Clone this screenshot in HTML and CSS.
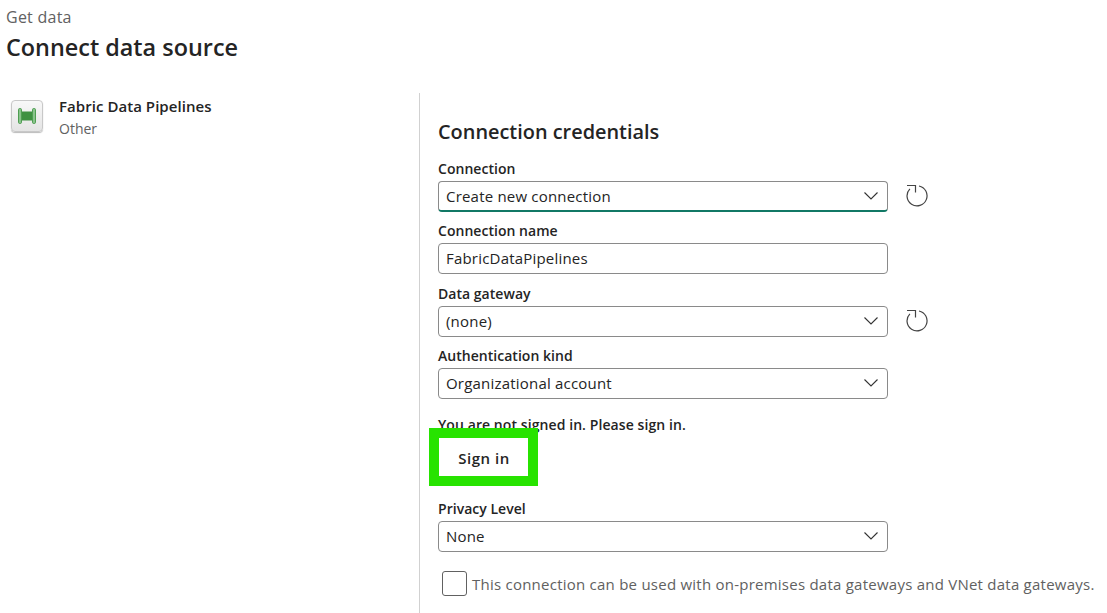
FILE: index.html
```html
<!DOCTYPE html>
<html lang="en">
<head>
<meta charset="utf-8">
<title>Connect data source</title>
<link rel="stylesheet" href="styles.css">
</head>
<body>
<header class="head">
  <div class="crumb">Get data</div>
  <h1 class="title">Connect data source</h1>
</header>
<main class="main">
  <aside class="side">
    <div class="tile">
      <svg width="20" height="16" viewBox="0 0 20 16"><rect x="4" y="3.5" width="12" height="9" fill="#3f9142"/><rect x="1.5" y="0.5" width="3" height="15" rx="1.2" fill="#8ac48c" stroke="#4f9e52"/><rect x="15.5" y="0.5" width="3" height="15" rx="1.2" fill="#8ac48c" stroke="#4f9e52"/></svg>
    </div>
    <div class="meta">
      <div class="name">Fabric Data Pipelines</div>
      <div class="kind">Other</div>
    </div>
  </aside>
  <section class="form">
    <h2 class="sub">Connection credentials</h2>
    <div class="lab lab-first">Connection</div>
    <div class="row">
      <div class="box box-active"><span>Create new connection</span><svg class="chev" width="14" height="8" viewBox="0 0 14 8"><path d="M.5.5l6.5 6.5 6.5-6.5" fill="none" stroke="#333" stroke-width="1.1"/></svg></div>
      <svg class="refresh" width="24" height="25" viewBox="0 0 24 25"><path d="M4.9 6.8A10 10 0 1 0 14 4" fill="none" stroke="#444" stroke-width="1.2"/><path d="M2 3.5H10.5V10.5" fill="none" stroke="#444" stroke-width="1.2"/></svg>
    </div>
    <div class="lab">Connection name</div>
    <div class="row"><div class="box"><span>FabricDataPipelines</span></div></div>
    <div class="lab lab-wide">Data gateway</div>
    <div class="row">
      <div class="box"><span>(none)</span><svg class="chev" width="14" height="8" viewBox="0 0 14 8"><path d="M.5.5l6.5 6.5 6.5-6.5" fill="none" stroke="#333" stroke-width="1.1"/></svg></div>
      <svg class="refresh" width="24" height="25" viewBox="0 0 24 25"><path d="M4.9 6.8A10 10 0 1 0 14 4" fill="none" stroke="#444" stroke-width="1.2"/><path d="M2 3.5H10.5V10.5" fill="none" stroke="#444" stroke-width="1.2"/></svg>
    </div>
    <div class="lab">Authentication kind</div>
    <div class="row"><div class="box"><span>Organizational account</span><svg class="chev" width="14" height="8" viewBox="0 0 14 8"><path d="M.5.5l6.5 6.5 6.5-6.5" fill="none" stroke="#333" stroke-width="1.1"/></svg></div></div>
    <div class="signin">
      <div class="notice">You are not signed in. Please sign in.</div>
      <div class="mark"><div class="btn">Sign in</div></div>
    </div>
    <div class="lab">Privacy Level</div>
    <div class="row"><div class="box"><span>None</span><svg class="chev" width="14" height="8" viewBox="0 0 14 8"><path d="M.5.5l6.5 6.5 6.5-6.5" fill="none" stroke="#333" stroke-width="1.1"/></svg></div></div>
    <div class="check"><div class="cb"></div><span>This connection can be used with on-premises data gateways and VNet data gateways.</span></div>
  </section>
</main>
</body>
</html>
```
FILE: styles.css
```css
* { box-sizing: border-box; }
html, body { margin: 0; height: 100%; overflow: hidden; background: #fff; }
body { font-family: "Open Sans", "Noto Sans", sans-serif; color: #242424; width: 1107px; height: 613px; }
.head { padding: 7px 0 0 6px; height: 93px; }
.crumb { font-size: 16px; line-height: 20px; color: #616161; letter-spacing: .25px; }
.title { margin: 4px 0 0; font-size: 23.4px; line-height: 32px; font-weight: 600; color: #242424; }
.main { display: flex; height: 520px; }
.side { width: 420px; border-right: 1px solid #d1d1d1; display: flex; padding: 7px 0 0 11px; }
.tile { width: 32px; height: 32px; border: 1px solid #c8c8c8; border-radius: 4px; background: linear-gradient(#f8f8f8, #e4e4e4); display: flex; align-items: center; justify-content: center; box-shadow: 0 1px 1px #bbb; }
.meta { margin: -7px 0 0 16px; }
.name { font-size: 15px; letter-spacing: .05px; line-height: 20px; font-weight: 600; margin-top: 3px; }
.kind { font-size: 14px; line-height: 20px; color: #616161; margin-top: 3px; }
.form { padding: 24px 0 0 18px; flex: 1; }
.sub { margin: 0; font-size: 19.9px; line-height: 30px; font-weight: 600; }
.lab { font-size: 14px; letter-spacing: .03px; line-height: 18px; font-weight: 600; height: 21px; margin-top: 10px; }
.lab-first { margin-top: 13px; }
.lab-wide { margin-top: 11px; }
.row { display: flex; align-items: center; height: 31px; }
.box { width: 450px; height: 31px; border: 1px solid #8a8a8a; border-radius: 4px; display: flex; align-items: center; justify-content: space-between; padding: 0 9px 1px 7px; font-size: 15px; letter-spacing: .2px; color: #242424; }
.box-active { border-bottom: 2px solid #117865; padding-bottom: 0; }
.refresh { margin: 0 0 5px 17px; flex: none; }
.chev { flex: none; }
.signin { position: relative; height: 91px; padding-top: 17px; }
.notice { font-size: 14px; letter-spacing: .08px; line-height: 18px; font-weight: 600; }
.mark { position: absolute; left: -9px; top: 29px; width: 109px; height: 58px; border: 10px solid #27e300; background: #fff; display: flex; }
.btn { flex: 1; border-radius: 3px; display: flex; align-items: center; justify-content: center; font-size: 15px; letter-spacing: .5px; font-weight: 600; padding: 1px 0 0 1px; }
.check { display: flex; align-items: center; margin: 19px 0 0 4px; font-size: 15px; letter-spacing: .24px; color: #616161; white-space: nowrap; }
.cb { width: 25px; height: 25px; border: 1px solid #616161; border-radius: 3px; margin-right: 5px; flex: none; }
```
